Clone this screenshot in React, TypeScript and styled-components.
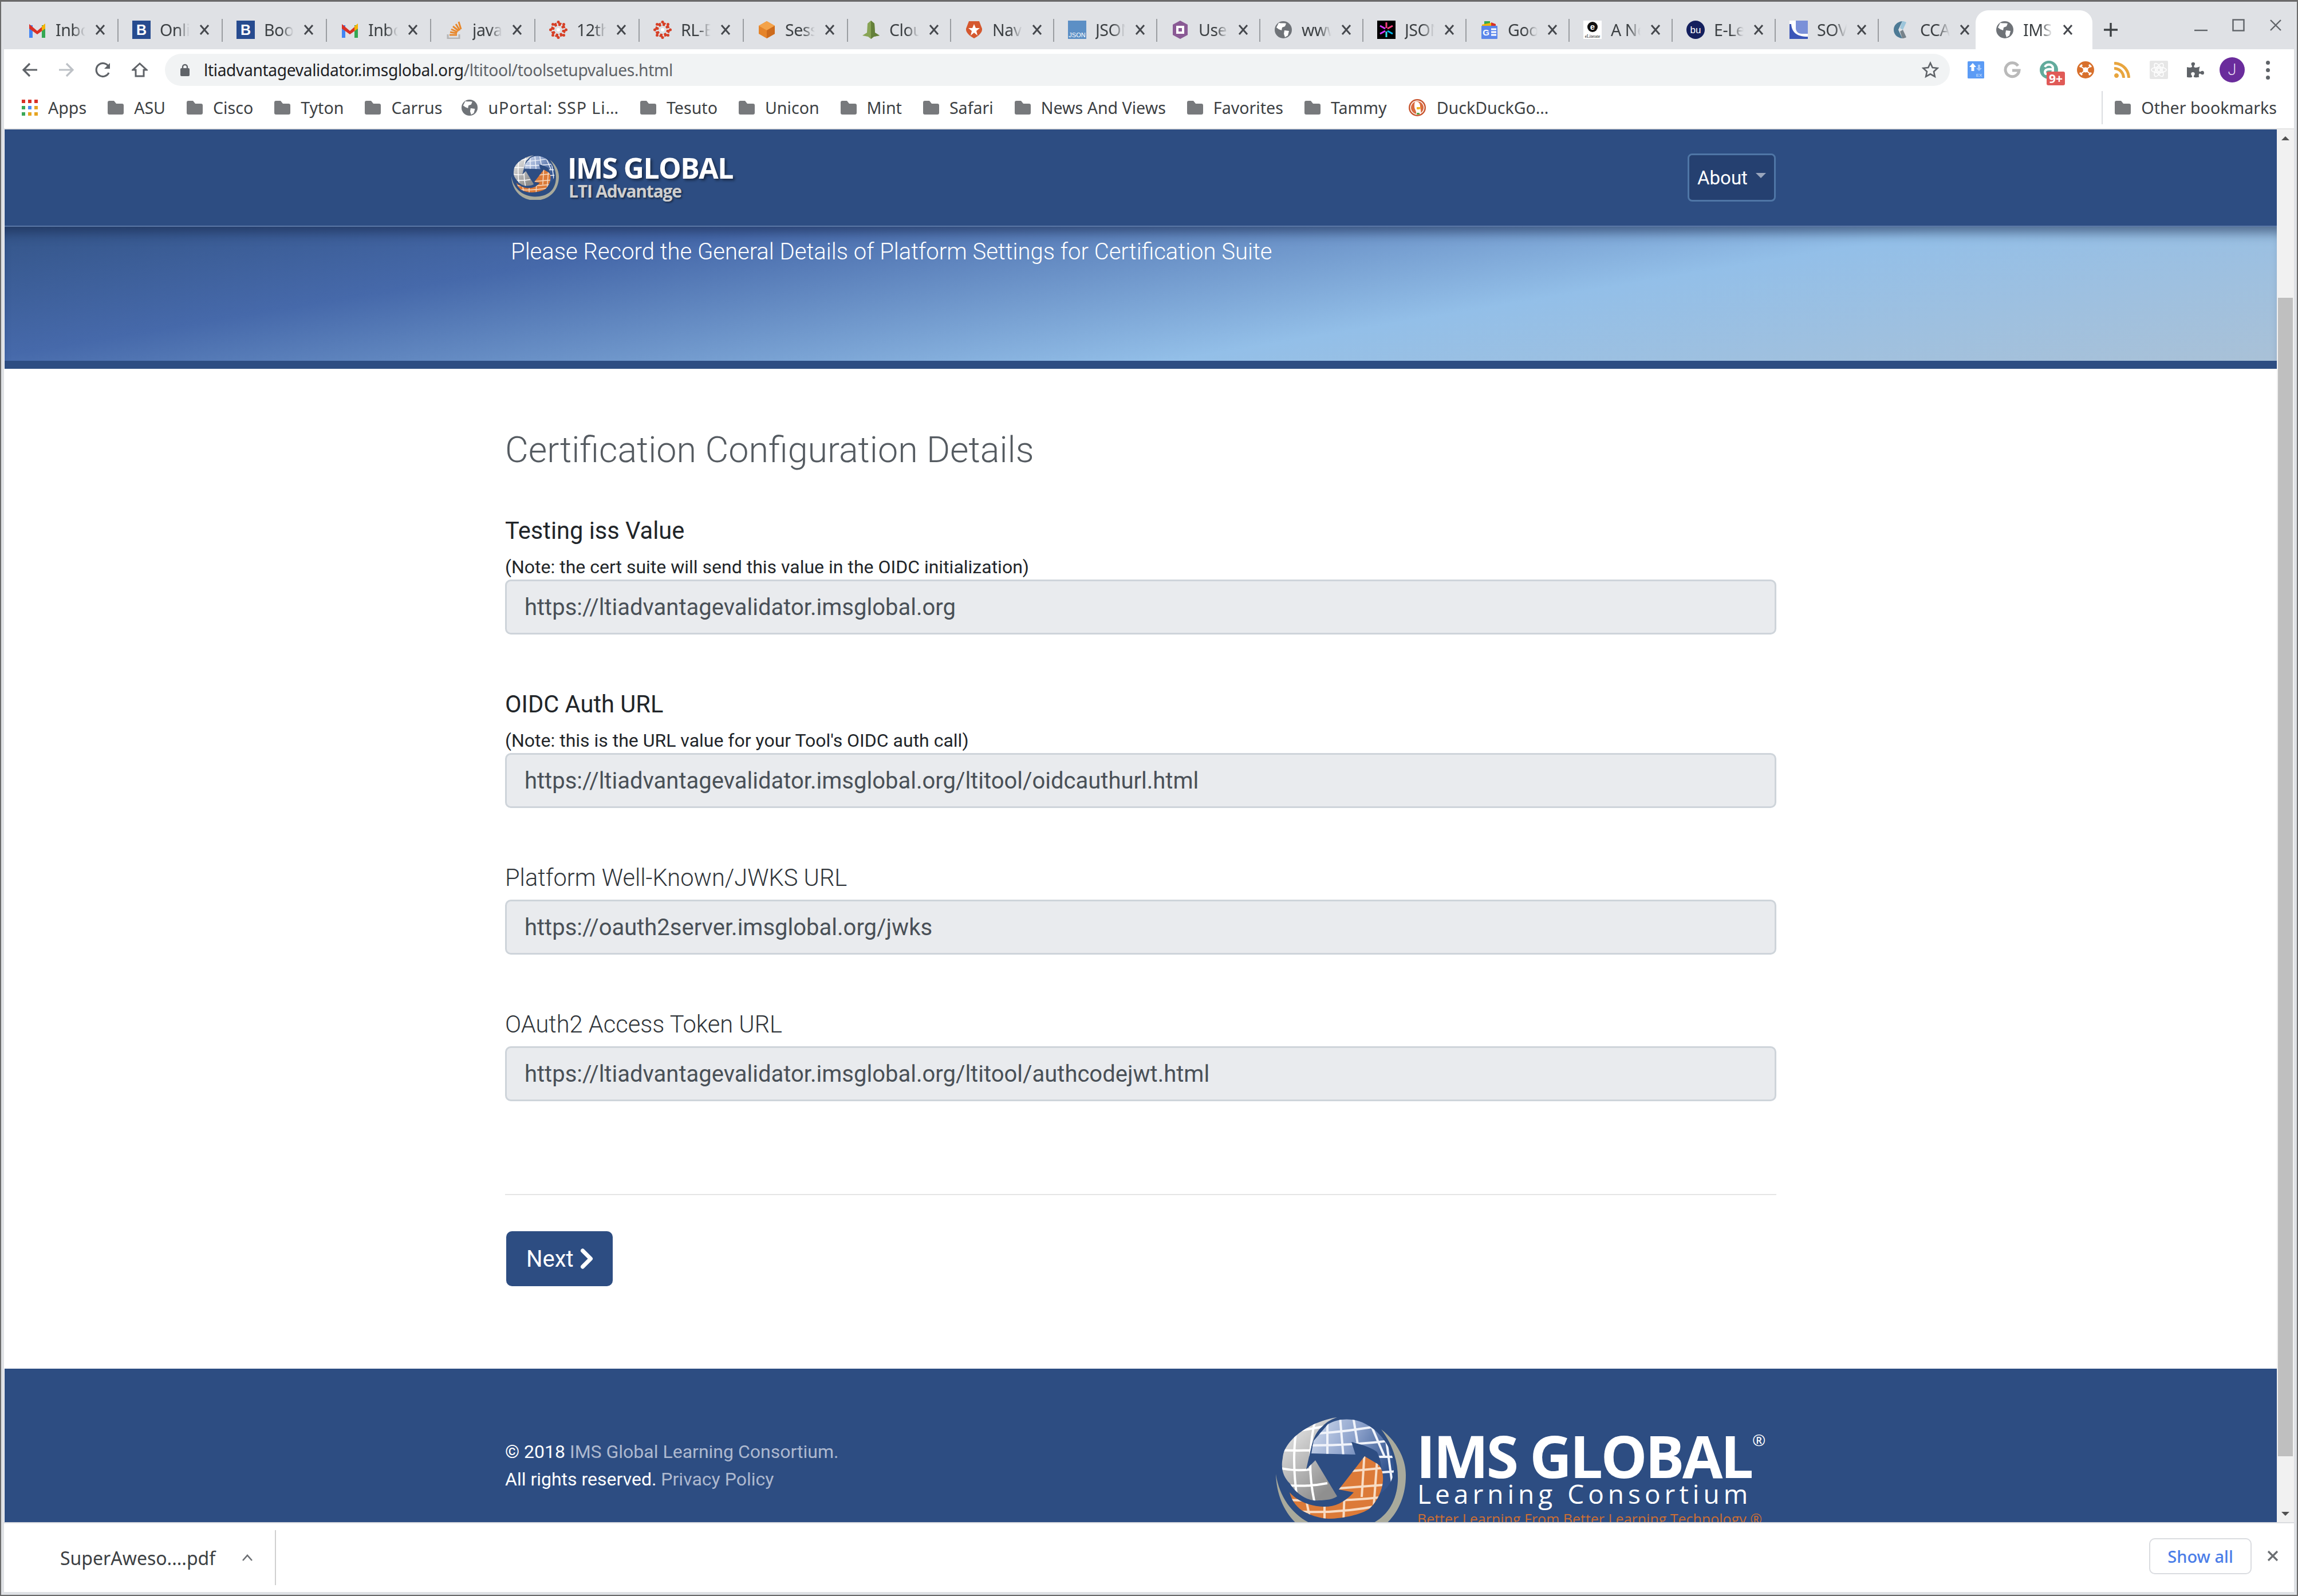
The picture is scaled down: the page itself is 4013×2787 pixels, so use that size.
import React from 'react';
import styled, { createGlobalStyle } from 'styled-components';
import { FaPuzzlePiece, FaRss } from 'react-icons/fa';

const Global = createGlobalStyle`
  html, body { margin: 0; padding: 0; background: #fff; overflow: hidden; }
  * { box-sizing: border-box; }
`;

const CHROME_FONT = `"Noto Sans", "Open Sans", sans-serif`;
const PAGE_FONT = `Roboto, "Liberation Sans", sans-serif`;
const NAVY = '#2d4d82';

const Window = styled.div`
  width: 4013px; height: 2787px;
  display: flex; flex-direction: column;
  border: 2px solid #6a6a6a; border-top-width: 3px;
  padding: 0 5px 5px;
  background: #dfe1e5;
  overflow: hidden;
  font-family: ${CHROME_FONT};
`;

const TabStrip = styled.div`
  height: 83px; flex: none;
  display: flex; align-items: stretch;
  padding: 15px 21px 0 18px;
  background: #dfe1e5;
`;
const Tab = styled.div<{ $w: number; $active?: boolean; $noSep?: boolean }>`
  position: relative;
  width: ${p => p.$w}px; height: 68px; flex: none;
  display: flex; align-items: center;
  padding-left: 24px;
  z-index: ${p => (p.$active ? 1 : 0)};
  ${p => p.$active && `
    &::before {
      content: ''; position: absolute; top: 0; bottom: 0; left: -11px; right: -13px;
      background: #fff; border-radius: 22px 22px 0 0; z-index: -1;
    }
  `}
  ${p => !p.$noSep && `
    &::after {
      content: ''; position: absolute; right: 0; top: 15px; height: 40px; width: 2px;
      background: #9a9da1;
    }
  `}
`;
const TabIcon = styled.span`
  width: 32px; height: 32px; flex: none; display: flex;
  svg { display: block; width: 100%; height: 100%; }
`;
const TabTitle = styled.span`
  width: 52px; margin-left: 16px; flex: none;
  overflow: hidden; white-space: nowrap;
  font-size: 28.6px; line-height: 40px; color: #3c4043; letter-spacing: -0.5px;
  -webkit-mask-image: linear-gradient(to right, #000 58%, transparent 100%);
  mask-image: linear-gradient(to right, #000 58%, transparent 100%);
`;
const TabClose = styled.span`
  width: 24px; height: 24px; margin-left: 14px; flex: none; display: flex;
`;
const NewTab = styled.span`
  margin-left: 32px; align-self: center; display: flex; width: 26px; height: 26px;
`;
const WinControls = styled.div`
  margin-left: auto; padding-top: 15px; display: flex; gap: 43px; align-items: flex-start;
`;

const Toolbar = styled.div`
  height: 84px; flex: none;
  display: flex; align-items: center;
  padding: 0 41px 12px 31px;
  background: #fff;
`;
const NavIcons = styled.div`
  display: flex; gap: 36px; align-items: center; margin-right: 30px;
`;
const Omnibox = styled.div`
  flex: 1; height: 56px; border-radius: 28px;
  background: #f1f3f4;
  display: flex; align-items: center;
  padding: 0 19px 0 27px;
  font-size: 28.2px; letter-spacing: -0.36px;
`;
const Host = styled.span`color: #202124;`;
const UrlPath = styled.span`color: #5f6368;`;
const UrlText = styled.div`margin-left: 25px; white-space: nowrap; flex: 1;`;
const ExtIcons = styled.div`
  margin-left: 29px; display: flex; gap: 32px; align-items: center;
`;
const ExtIcon = styled.span`
  position: relative; width: 32px; height: 32px; display: flex; align-items: center; justify-content: center;
  svg { display: block; }
`;
const Badge = styled.span`
  position: absolute; left: 12px; top: 19px; width: 32px; height: 24px;
  background: #e05a57; border-radius: 3px; color: #fff;
  font-size: 21px; font-weight: 700; line-height: 24px; text-align: center;
`;
const Avatar = styled.span`
  width: 44px; height: 44px; border-radius: 50%; margin-left: -6px;
  background: #6a2c9c; color: #e8dcf3;
  display: flex; align-items: center; justify-content: center;
  font-family: ${PAGE_FONT}; font-size: 27px; font-weight: 300;
`;
const MenuDots = styled.span`
  margin-left: 37px; width: 8px; display: flex; flex-direction: column; gap: 6px;
  i { display: block; width: 7px; height: 7px; border-radius: 50%; background: #5f6368; }
`;

const BookmarkBar = styled.div`
  height: 56px; flex: none;
  display: flex; align-items: center; gap: 37px;
  padding: 0 30px 18px 31px;
  background: #fff;
  border-bottom: 2px solid #e5e5e5;
`;
const Bookmark = styled.div<{ $wide?: boolean }>`
  display: flex; align-items: center; gap: 18px;
  font-size: 28.6px; line-height: 36px; color: #3c4043; white-space: nowrap;
  ${p => p.$wide && 'margin-left: -5px; letter-spacing: 0.9px;'}
`;
const OtherBookmarks = styled(Bookmark)`
  margin-left: auto; position: relative;
  &::before {
    content: ''; position: absolute; left: -23px; top: -11px; bottom: -11px; width: 2px; background: #dadce0;
  }
`;

const Viewport = styled.div`
  flex: 1; min-height: 0; display: flex; background: #fff; padding-left: 1px;
`;
const Page = styled.div`
  flex: 1; min-width: 0; overflow: hidden; font-family: ${PAGE_FONT};
`;
const Scrollbar = styled.div`
  width: 30px; flex: none; background: #f1f1f1; display: flex; flex-direction: column; align-items: center;
`;
const ScrollArrow = styled.div<{ $down?: boolean }>`
  height: 30px; flex: none; display: flex; align-items: center; justify-content: center;
  ${p => p.$down && 'margin-top: auto;'}
  &::after {
    content: ''; width: 0; height: 0;
    border-left: 7px solid transparent; border-right: 7px solid transparent;
    ${p => (p.$down ? 'border-top: 7px solid #505050;' : 'border-bottom: 7px solid #505050;')}
  }
`;
const ScrollThumb = styled.div`
  width: 26px; height: 2023px; margin-top: 264px; background: #bfbfbf;
`;

const Container = styled.div`width: 2220px; margin: 0 auto;`;

const NavBar = styled.div`
  height: 170px; background: ${NAVY}; border-bottom: 2px solid #5a77a6;
`;
const NavInner = styled(Container)`
  height: 168px; display: flex; align-items: center; justify-content: space-between;
  padding: 0 1px 0 11px;
`;
const NavBrand = styled.div`display: flex; gap: 15px; align-items: center;`;
const BrandText = styled.div`display: flex; flex-direction: column; font-family: "Open Sans", sans-serif;`;
const BrandTitle = styled.span`
  font-size: 50px; line-height: 48px; font-weight: 700; color: #fff; letter-spacing: -1.6px;
  text-shadow: 3px 3px 4px rgba(0,0,0,.45);
`;
const BrandSub = styled.span`
  font-size: 30px; line-height: 34px; font-weight: 700; color: #cfcfcf; letter-spacing: -1.2px; margin-left: 2px;
  text-shadow: 2px 2px 3px rgba(0,0,0,.45);
`;
const AboutButton = styled.div`
  width: 154px; height: 84px; background: #254070;
  border: 3px solid #4f76a6; border-radius: 8px;
  display: flex; align-items: center; padding-left: 14px; gap: 14px;
  color: #fff; font-size: 33px;
  &::after {
    content: ''; width: 0; height: 0; margin-top: -8px;
    border-left: 9px solid transparent; border-right: 9px solid transparent; border-top: 9px solid #9aa6bd;
  }
`;

const Hero = styled.div`
  height: 248px; border-bottom: 14px solid ${NAVY};
  background: linear-gradient(170.5deg, #345589 0%, #4669aa 25%, #93bfe8 64%, #a9c1d7 100%);
  box-shadow: inset 0 22px 20px -12px rgba(20,35,70,.55);
`;
const HeroInner = styled(Container)`padding: 19px 0 0 10px;`;
const HeroTitle = styled.div`
  font-size: 40px; line-height: 50px; font-weight: 300; color: #fff;
`;

const Main = styled(Container)`
  padding-top: 103px; display: flex; flex-direction: column; align-items: stretch;
`;
const PageTitle = styled.h2`
  margin: 0 0 78px; font-size: 62.8px; line-height: 77px; font-weight: 300; color: #555b61;
`;
const Field = styled.div`margin-bottom: 97px;`;
const LastField = styled(Field)`margin-bottom: 162px;`;
const FieldLabel = styled.div<{ $light?: boolean }>`
  font-size: 41.6px; line-height: 50px;
  font-weight: ${p => (p.$light ? 300 : 400)};
  color: ${p => (p.$light ? '#30353a' : '#212529')};
  margin-bottom: ${p => (p.$light ? 13 : 18)}px;
`;
const FieldNote = styled.div`
  font-size: 32px; line-height: 40px; color: #212529; margin-bottom: 2px;
`;
const ReadOnlyInput = styled.div`
  height: 96px; background: #e9ebee;
  border: 3px solid #ced4da; border-radius: 10px;
  padding-left: 31px;
  display: flex; align-items: center;
  font-size: 40px; color: #495057; white-space: nowrap;
`;
const Divider = styled.div`height: 2px; background: #e5e5e5; margin-bottom: 63px;`;
const NextButton = styled.div`
  width: 186px; height: 96px; margin: 0 0 144px 2px;
  background: ${NAVY}; border-radius: 10px; color: #fff;
  display: flex; align-items: center; gap: 11px; padding-left: 35px;
  font-size: 40px;
`;

const Footer = styled.div`background: ${NAVY}; padding-top: 84px; height: 420px;`;
const FooterInner = styled(Container)`
  display: grid; grid-template-columns: 1346px 1fr; align-items: start;
`;
const Copy = styled.div`
  margin-top: 37px; font-size: 32px; line-height: 48px; color: #fff;
`;
const FootLink = styled.span`color: #aeb9cf;`;
const FooterLogo = styled.div`display: flex; gap: 18px; align-items: flex-start;`;
const LogoText = styled.div`display: flex; flex-direction: column; font-family: "Open Sans", sans-serif; white-space: nowrap;`;
const LogoTitle = styled.div`
  position: relative; margin-top: 21px; font-size: 102px; line-height: 94px; font-weight: 700; color: #fff; letter-spacing: -3.6px;
`;
const LogoReg = styled.span`
  position: absolute; left: 587px; top: 4px; font-size: 28px; line-height: 30px; letter-spacing: 0; font-weight: 400;
`;
const LogoSub = styled.div`
  font-size: 46px; line-height: 38px; color: #fff; letter-spacing: 7px; margin-left: 2px;
`;
const LogoTag = styled.div`
  margin-top: 10px; font-size: 25px; line-height: 30px; color: #cf6f33; margin-left: 2px;
`;

const DownloadBar = styled.div`
  height: 122px; flex: none; background: #fff; border-top: 2px solid #dadce0;
  display: flex; align-items: center; padding: 0 27px 0 98px; font-size: 32px; color: #3c4043;
`;
const DownloadName = styled.span`white-space: nowrap;`;
const DownloadChevron = styled.span`margin-left: 46px; display: flex;`;
const DownloadSep = styled.span`width: 2px; height: 96px; background: #d0d0d0; margin-left: 38px;`;
const ShowAll = styled.div`
  margin: 0 0 6px auto; width: 179px; height: 63px; border: 2px solid #dadce0; border-radius: 10px;
  display: flex; align-items: center; justify-content: center;
  color: #4a7de8; font-size: 29px; font-weight: 500;
`;
const DownloadClose = styled.span`margin: 0 0 6px 27px; display: flex;`;

/* ---------- drawings ---------- */

const CloseX = () => (
  <svg width="24" height="24" viewBox="0 0 24 24"><path d="M5 4l14 16M19 4L5 20" stroke="#45484d" strokeWidth="3" /></svg>
);

const GrayGlobe = ({ s = 32 }: { s?: number }) => (
  <svg viewBox="0 0 32 32" width={s} height={s}>
    <circle cx="16" cy="16" r="15" fill="#6f7378" />
    <path d="M8 4c5 1 9 0 13 1l-2 5-5 2-1 5-5-2-4-3zM18 17l8 1-2 8-5 3-2-6z" fill="#fff" />
  </svg>
);
const Gmail = () => (
  <svg viewBox="0 0 32 32"><path d="M2 8h6v22H2z" fill="#4285f4" /><path d="M24 8h6v22h-6z" fill="#34a853" /><path d="M2 6l14 12L30 6v8L16 24 2 14z" fill="#d93025" /><path d="M24 10l6-5v9l-6 4z" fill="#f4b400" /></svg>
);
const BTile = () => (
  <svg viewBox="0 0 32 32"><rect width="32" height="32" fill="#274b8f" /><text x="16" y="25" textAnchor="middle" fontFamily="Liberation Sans" fontWeight="700" fontSize="25" fill="#fff">B</text></svg>
);
const StackIcon = () => (
  <svg viewBox="0 0 32 32"><path d="M5 24v7h20v-7" fill="none" stroke="#b5b5b5" strokeWidth="3" /><path d="M8 25h13M9 20l12 2M11 15l11 5M14 10l10 8M19 6l7 11M24 2l4 13" stroke="#e8882c" strokeWidth="3" /></svg>
);
const Canvas = () => (
  <svg viewBox="0 0 32 32"><circle cx="16" cy="16" r="10" fill="none" stroke="#d64027" strokeWidth="6" strokeDasharray="5 2.8" /><circle cx="16" cy="16" r="3" fill="#fff" />
    <circle cx="16" cy="2.500" r="2.500" fill="#d64027" /><circle cx="16" cy="29.500" r="2.500" fill="#d64027" /><circle cx="2.500" cy="16" r="2.500" fill="#d64027" /><circle cx="29.500" cy="16" r="2.500" fill="#d64027" /><circle cx="6.500" cy="6.500" r="2.500" fill="#d64027" /><circle cx="25.500" cy="6.500" r="2.500" fill="#d64027" /><circle cx="6.500" cy="25.500" r="2.500" fill="#d64027" /><circle cx="25.500" cy="25.500" r="2.500" fill="#d64027" />
  </svg>
);
const OrangeBox = () => (
  <svg viewBox="0 0 32 32"><path d="M16 1l14 8v14l-14 8-14-8V9z" fill="#e5842a" /><path d="M16 1l14 8-14 8L2 9z" fill="#f4a34a" /><path d="M16 17v14l14-8V9z" fill="#cd6b1c" /></svg>
);
const GreenBell = () => (
  <svg viewBox="0 0 32 32"><path d="M16 0l6 5 1 16 8 5-10 2-5 4-5-4-10-2 8-5 1-16z" fill="#88a455" /><path d="M16 0l6 5 1 16 8 5-10 2-5 4z" fill="#64803a" /></svg>
);
const Auth0 = () => (
  <svg viewBox="0 0 32 32"><path d="M7 1h18l5 13c1 6-6 13-14 17C8 27 1 20 2 14z" fill="#d5582f" /><path d="M16 6l3 7h7l-6 5 2 8-6-5-6 5 2-8-6-5h7z" fill="#fff" /></svg>
);
const JsonTile = () => (
  <svg viewBox="0 0 32 32"><rect width="32" height="32" fill="#5c8fc5" /><text x="16" y="29" textAnchor="middle" fontFamily="Liberation Sans" fontSize="11" fill="#fff">JSON</text></svg>
);
const PurpleHex = () => (
  <svg viewBox="0 0 32 32"><path d="M16 0l13 7v18l-13 7-13-7V7z" fill="#8a5a95" /><path d="M9 9h14v14H9z" fill="#fff" /><path d="M13 13h6v6h-6z" fill="#8a5a95" /></svg>
);
const JwtTile = () => (
  <svg viewBox="0 0 32 32"><rect width="32" height="32" fill="#000" /><path d="M16 3v10" stroke="#f5417b" strokeWidth="3" /><path d="M16 19v10" stroke="#35e0ea" strokeWidth="3" /><path d="M5 9l9 5" stroke="#d63aff" strokeWidth="3" /><path d="M27 23l-9-5" stroke="#00b9f1" strokeWidth="3" /><path d="M5 23l9-5" stroke="#d63aff" strokeWidth="3" /><path d="M27 9l-9 5" stroke="#f5417b" strokeWidth="3" /></svg>
);
const GoogleEdu = () => (
  <svg viewBox="0 0 32 32"><path d="M7 1h10v8H7z" fill="#34a853" /><path d="M3 7l14-3 8 2v6H3z" fill="#f4b400" /><path d="M19 3l8 3v6h-8z" fill="#d93025" /><rect x="2" y="9" width="28" height="23" rx="1" fill="#5a85ea" /><text x="10" y="26" textAnchor="middle" fontFamily="Liberation Sans" fontWeight="700" fontSize="15" fill="#fff">G</text><path d="M19 15h9M19 20h9M19 25h9" stroke="#fff" strokeWidth="3" /></svg>
);
const ELiterate = () => (
  <svg viewBox="0 0 32 32"><rect width="32" height="32" fill="#fff" /><circle cx="16" cy="11" r="9" fill="#111" /><text x="16" y="16" textAnchor="middle" fontFamily="Liberation Sans" fontWeight="700" fontSize="15" fill="#fff">e</text><text x="16" y="30" textAnchor="middle" fontFamily="Liberation Serif" fontSize="7.5" fill="#111">eLiterate</text></svg>
);
const BuCircle = () => (
  <svg viewBox="0 0 32 32"><circle cx="16" cy="16" r="16" fill="#14205e" /><text x="16" y="22" textAnchor="middle" fontFamily="Liberation Sans" fontSize="17" fill="#fff">bu</text></svg>
);
const UShape = () => (
  <svg viewBox="0 0 32 32"><rect width="32" height="32" fill="#fff" /><path d="M11 0H32V23H22C15 23 11 19 11 13Z" fill="#7a90d8" /><path d="M0 6H3C4 20 12 28 32 28V32H0Z" fill="#3a55b8" /></svg>
);
const CcaIcon = () => (
  <svg viewBox="0 0 32 32"><path d="M17 1l-7 15 7 15C8 30 2 24 2 16S8 2 17 1z" fill="#4d7a95" /><path d="M17 1c4 0 7 2 7 2l-6 13-5-3z" fill="#9cc5da" /><path d="M13 19l5-3 6 13s-3 2-7 2z" fill="#77828a" /></svg>
);

const TABS: { t: string; w: number; icon: React.ReactNode; active?: boolean; noSep?: boolean }[] = [
  { t: 'Inbox', w: 182, icon: <Gmail /> },
  { t: 'Online', w: 182, icon: <BTile /> },
  { t: 'Book', w: 182, icon: <BTile /> },
  { t: 'Inbox', w: 182, icon: <Gmail /> },
  { t: 'javascript', w: 182, icon: <StackIcon /> },
  { t: '12th', w: 182, icon: <Canvas /> },
  { t: 'RL-EX', w: 182, icon: <Canvas /> },
  { t: 'Session', w: 182, icon: <OrangeBox /> },
  { t: 'Cloud', w: 180, icon: <GreenBell /> },
  { t: 'Navigate', w: 180, icon: <Auth0 /> },
  { t: 'JSON', w: 180, icon: <JsonTile /> },
  { t: 'Users', w: 180, icon: <PurpleHex /> },
  { t: 'www.', w: 180, icon: <GrayGlobe /> },
  { t: 'JSON', w: 180, icon: <JwtTile /> },
  { t: 'Google', w: 180, icon: <GoogleEdu /> },
  { t: 'A New', w: 180, icon: <ELiterate /> },
  { t: 'E-Learn', w: 180, icon: <BuCircle /> },
  { t: 'SOVA', w: 180, icon: <UShape /> },
  { t: 'CCA', w: 180, icon: <CcaIcon />, noSep: true },
  { t: 'IMS', w: 180, icon: <GrayGlobe />, active: true, noSep: true },
];

const Folder = () => (
  <svg width="28" height="24" viewBox="0 0 28 24"><path d="M0 3a3 3 0 013-3h8l4 5h10a3 3 0 013 3v13a3 3 0 01-3 3H3a3 3 0 01-3-3z" fill="#77797c" /></svg>
);
const AppsGrid = () => (
  <svg width="28" height="28" viewBox="0 0 28 28">
    {[['#d93025', '#d93025', '#d93025'], ['#3aa757', '#4b8cf0', '#e6a522'], ['#3aa757', '#e6a522', '#e6a522']].map((row, r) =>
      row.map((c, i) => <rect key={`${r}${i}`} x={i * 11} y={r * 11} width="6" height="6" fill={c} />)
    )}
  </svg>
);
const Duck = () => (
  <svg width="32" height="32" viewBox="0 0 32 32"><circle cx="16" cy="16" r="15" fill="#c8552f" /><circle cx="16" cy="16" r="12.5" fill="#fff" /><circle cx="16" cy="16" r="11" fill="#d96a3f" /><path d="M12 6c5-2 9 2 9 7 0 4 2 9 1 14h-8c1-5-3-8-3-13 0-3 0-6 1-8z" fill="#fff" /><path d="M15 15h8l-3 4h-5z" fill="#f0b429" /><path d="M15 25h5v3h-5z" fill="#5aa845" /></svg>
);
const ChevronBold = () => (
  <svg width="24" height="36" viewBox="0 0 24 36"><path d="M4.500 4L18.500 18 4.500 32" fill="none" stroke="#fff" strokeWidth="7" strokeLinecap="round" strokeLinejoin="round" /></svg>
);

const BOOKMARKS: { t: string; kind?: 'apps' | 'globe' | 'duck' }[] = [
  { t: 'Apps', kind: 'apps' }, { t: 'ASU' }, { t: 'Cisco' }, { t: 'Tyton' }, { t: 'Carrus' },
  { t: 'uPortal: SSP Li…', kind: 'globe' }, { t: 'Tesuto' }, { t: 'Unicon' }, { t: 'Mint' }, { t: 'Safari' },
  { t: 'News And Views' }, { t: 'Favorites' }, { t: 'Tammy' }, { t: 'DuckDuckGo…', kind: 'duck' },
];

const Grid = ({ lines, color }: { lines: string; color: string }) => (
  <path d={lines} fill="none" stroke={color} strokeWidth="4" />
);

const Globe = ({ width, id }: { width: number; id: string }) => {
  const grey = 'M107 1C60 8 14 40 12 72C8 92 14 106 24 116C38 138 58 148 75 146C88 146 100 144 107 139L69 76L53 92L62 52C66 36 72 24 82 16C90 8 98 4 107 1Z';
  const blue = 'M91 13L66 42L62 64L139 66L132 44C150 48 172 56 177 62C186 80 188 110 180 136C196 124 208 110 206 84C204 50 172 10 133 5C118 3 102 6 91 13Z';
  const orange = 'M155 69L110 127L136 132C118 152 100 158 82 157C60 156 38 148 24 132C28 148 38 160 50 166C68 176 90 180 108 177C136 174 158 166 165 159C178 146 186 128 187 112C188 98 184 86 177 82Z';
  return (
    <svg width={width} height={(width * 216) / 227} viewBox="0 0 227 216" style={{ flex: 'none', display: 'block' }}>
      <defs>
        <linearGradient id={`${id}g`} x1="0" y1="0" x2="0.6" y2="1"><stop offset="0" stopColor="#f2f2f2" /><stop offset="1" stopColor="#8f8f8f" /></linearGradient>
        <linearGradient id={`${id}b`} x1="0" y1="0" x2="1" y2="0.5"><stop offset="0" stopColor="#d3ddef" /><stop offset="0.5" stopColor="#8ea3cc" /><stop offset="1" stopColor="#32548f" /></linearGradient>
        <clipPath id={`${id}cg`}><path d={grey} /></clipPath>
        <clipPath id={`${id}cb`}><path d={blue} /></clipPath>
        <clipPath id={`${id}co`}><path d={orange} /></clipPath>
      </defs>
      <path d="M0 100C2 170 50 216 113 216C180 216 227 170 227 102C227 70 208 40 184 22C205 50 214 80 213 112C210 170 170 198 113 198C60 198 10 165 0 100Z" fill="#a9aa9c" />
      <path d={grey} fill={`url(#${id}g)`} />
      <g clipPath={`url(#${id}cg)`}>
        <Grid color="#fff" lines="M0 30Q40 25 90 16M0 58Q40 60 70 58M0 88Q30 96 60 92M0 118Q50 124 90 116M40 0Q24 70 40 160M70 0Q50 80 70 160" />
      </g>
      <path d={blue} fill={`url(#${id}b)`} />
      <g clipPath={`url(#${id}cb)`}>
        <Grid color="#f0f3fa" lines="M60 30Q130 26 190 14M60 50Q140 50 215 40M130 70L220 70M140 100L215 95M90 0L90 70M112 0L118 70M135 0L145 60M160 0L190 70M190 20L205 130" />
      </g>
      <path d={orange} fill="#dc7a38" />
      <g clipPath={`url(#${id}co)`}>
        <Grid color="#f8dcc4" lines="M130 95L200 88M110 125L200 118M20 145Q100 150 190 140M30 165Q110 170 180 155M155 60L150 140M178 60L170 170M50 130L60 180M85 140L85 185M120 130L118 185" />
      </g>
    </svg>
  );
};

const FIELDS = [
  { label: 'Testing iss Value', note: '(Note: the cert suite will send this value in the OIDC initialization)', value: 'https://ltiadvantagevalidator.imsglobal.org' },
  { label: 'OIDC Auth URL', note: "(Note: this is the URL value for your Tool's OIDC auth call)", value: 'https://ltiadvantagevalidator.imsglobal.org/ltitool/oidcauthurl.html' },
  { label: 'Platform Well-Known/JWKS URL', value: 'https://oauth2server.imsglobal.org/jwks' },
];

export default function App() {
  return (
    <Window>
      <Global />
      <TabStrip>
        {TABS.map((tab, i) => (
          <Tab key={i} $w={tab.w} $active={tab.active} $noSep={tab.noSep}>
            <TabIcon>{tab.icon}</TabIcon>
            <TabTitle>{tab.t}</TabTitle>
            <TabClose><CloseX /></TabClose>
          </Tab>
        ))}
        <NewTab>
          <svg width="26" height="26" viewBox="0 0 26 26"><path d="M13 1v24M1 13h24" stroke="#3c4043" strokeWidth="3.4" /></svg>
        </NewTab>
        <WinControls>
          <svg width="23" height="22" viewBox="0 0 23 22"><path d="M0 20h23" stroke="#5f6368" strokeWidth="2.4" /></svg>
          <svg width="22" height="22" viewBox="0 0 22 22"><rect x="1.5" y="1.5" width="19" height="19" fill="none" stroke="#5f6368" strokeWidth="2.4" /></svg>
          <svg width="22" height="22" viewBox="0 0 22 22"><path d="M2 2l18 18M20 2L2 20" stroke="#5f6368" strokeWidth="2.4" /></svg>
        </WinControls>
      </TabStrip>

      <Toolbar>
        <NavIcons>
          <svg width="28" height="28" viewBox="0 0 28 28"><path d="M27 14H4M14 3L3 14l11 11" fill="none" stroke="#5f6368" strokeWidth="3.2" /></svg>
          <svg width="28" height="28" viewBox="0 0 28 28"><path d="M1 14h23M14 3l11 11-11 11" fill="none" stroke="#bdc1c6" strokeWidth="3.2" /></svg>
          <svg width="28" height="28" viewBox="0 0 28 28"><path d="M24 9a11.5 11.5 0 100 10" fill="none" stroke="#5f6368" strokeWidth="3.2" /><path d="M26 2v10H16z" fill="#5f6368" /></svg>
          <svg width="28" height="28" viewBox="0 0 28 28"><path d="M14 3L2 14h5v11h14V14h5z" fill="none" stroke="#5f6368" strokeWidth="3" /></svg>
        </NavIcons>
        <Omnibox>
          <svg width="16" height="22" viewBox="0 0 16 22"><path d="M4 9V6a4 4 0 018 0v3" fill="none" stroke="#5f6368" strokeWidth="2.4" /><rect y="8" width="16" height="14" rx="2" fill="#5f6368" /></svg>
          <UrlText><Host>ltiadvantagevalidator.imsglobal.org</Host><UrlPath>/ltitool/toolsetupvalues.html</UrlPath></UrlText>
          <svg width="30" height="30" viewBox="0 0 30 30"><path d="M15 3l3.7 8 8.8 1-6.5 6 1.8 8.7L15 22.3l-7.8 4.4L9 18l-6.500-6 8.800-1z" fill="none" stroke="#5f6368" strokeWidth="2.6" /></svg>
        </Omnibox>
        <ExtIcons>
          <ExtIcon>
            <svg width="29" height="30" viewBox="0 0 29 30"><rect width="29" height="30" rx="1.500" fill="#5b9bf5" /><path d="M9 3l6 7h-3.500v7h-5v-7H3z" fill="#fff" /><path d="M18 6h4v6h3l-5 5-5-5h3z" fill="#a9cbfa" /><text x="20" y="27" textAnchor="middle" fontFamily="Liberation Sans" fontSize="8" fill="#d8e7fd">EX</text></svg>
          </ExtIcon>
          <ExtIcon>
            <svg width="30" height="30" viewBox="0 0 30 30"><path d="M25 8a12 12 0 10 2 8H15" fill="none" stroke="#b9b9b9" strokeWidth="5" /></svg>
          </ExtIcon>
          <ExtIcon>
            <svg width="32" height="32" viewBox="0 0 32 32"><circle cx="16" cy="16" r="16" fill="#62ab9c" /><path d="M9 11a7.500 7.500 0 0114 1v11M22 15c-9-1-13 1-13 5s6 5 13 0" fill="none" stroke="#fff" strokeWidth="4" /></svg>
            <Badge>9+</Badge>
          </ExtIcon>
          <ExtIcon>
            <svg width="30" height="30" viewBox="0 0 30 30"><circle cx="15" cy="15" r="15" fill="#d8702c" /><circle cx="15" cy="15" r="4.500" fill="#fff" /><path d="M15 15L7 9M15 15l8-6M15 15l-8 7M15 15l8 7" stroke="#fff" strokeWidth="2" /><path d="M5 10l4-4M21 6l4 4M5 20l4 4M21 24l4-4" stroke="#fff" strokeWidth="3" /></svg>
          </ExtIcon>
          <ExtIcon><FaRss size={32} color="#e8a53e" /></ExtIcon>
          <ExtIcon>
            <svg width="32" height="32" viewBox="0 0 32 32"><rect width="32" height="32" rx="2" fill="#e6e6e6" /><circle cx="16" cy="16" r="3" fill="none" stroke="#fff" strokeWidth="1.600" /><ellipse cx="16" cy="16" rx="13" ry="5" fill="none" stroke="#fff" strokeWidth="1.500" /><ellipse cx="16" cy="16" rx="13" ry="5" fill="none" stroke="#fff" strokeWidth="1.500" transform="rotate(60 16 16)" /><ellipse cx="16" cy="16" rx="13" ry="5" fill="none" stroke="#fff" strokeWidth="1.500" transform="rotate(120 16 16)" /></svg>
          </ExtIcon>
          <ExtIcon><FaPuzzlePiece size={30} color="#5f6368" /></ExtIcon>
          <Avatar>J</Avatar>
        </ExtIcons>
        <MenuDots><i /><i /><i /></MenuDots>
      </Toolbar>

      <BookmarkBar>
        {BOOKMARKS.map(b => (
          <Bookmark key={b.t} $wide={b.kind === 'globe'}>
            {b.kind === 'apps' ? <AppsGrid /> : b.kind === 'globe' ? <GrayGlobe s={30} /> : b.kind === 'duck' ? <Duck /> : <Folder />}
            {b.t}
          </Bookmark>
        ))}
        <OtherBookmarks><Folder />Other bookmarks</OtherBookmarks>
      </BookmarkBar>

      <Viewport>
        <Page>
          <NavBar>
            <NavInner>
              <NavBrand>
                <Globe width={83} id="nav" />
                <BrandText>
                  <BrandTitle>IMS GLOBAL</BrandTitle>
                  <BrandSub>LTI Advantage</BrandSub>
                </BrandText>
              </NavBrand>
              <AboutButton>About</AboutButton>
            </NavInner>
          </NavBar>
          <Hero>
            <HeroInner>
              <HeroTitle>Please Record the General Details of Platform Settings for Certification Suite</HeroTitle>
            </HeroInner>
          </Hero>
          <Main>
            <PageTitle>Certification Configuration Details</PageTitle>
            {FIELDS.map(f => (
              <Field key={f.label}>
                <FieldLabel $light={!f.note}>{f.label}</FieldLabel>
                {f.note && <FieldNote>{f.note}</FieldNote>}
                <ReadOnlyInput>{f.value}</ReadOnlyInput>
              </Field>
            ))}
            <LastField>
              <FieldLabel $light>OAuth2 Access Token URL</FieldLabel>
              <ReadOnlyInput>https://ltiadvantagevalidator.imsglobal.org/ltitool/authcodejwt.html</ReadOnlyInput>
            </LastField>
            <Divider />
            <NextButton>Next <ChevronBold /></NextButton>
          </Main>
          <Footer>
            <FooterInner>
              <Copy>
                © 2018 <FootLink>IMS Global Learning Consortium.</FootLink><br />
                All rights reserved. <FootLink>Privacy Policy</FootLink>
              </Copy>
              <FooterLogo>
                <Globe width={227} id="foot" />
                <LogoText>
                  <LogoTitle>IMS GLOBAL<LogoReg>®</LogoReg></LogoTitle>
                  <LogoSub>Learning Consortium</LogoSub>
                  <LogoTag>Better Learning From Better Learning Technology ®</LogoTag>
                </LogoText>
              </FooterLogo>
            </FooterInner>
          </Footer>
        </Page>
        <Scrollbar>
          <ScrollArrow />
          <ScrollThumb />
          <ScrollArrow $down />
        </Scrollbar>
      </Viewport>

      <DownloadBar>
        <DownloadName>SuperAweso....pdf</DownloadName>
        <DownloadChevron>
          <svg width="20" height="14" viewBox="0 0 20 14"><path d="M2 12l8-9 8 9" fill="none" stroke="#6b6e72" strokeWidth="2.600" /></svg>
        </DownloadChevron>
        <DownloadSep />
        <ShowAll>Show all</ShowAll>
        <DownloadClose>
          <svg width="20" height="20" viewBox="0 0 20 20"><path d="M2 2l16 16M18 2L2 18" stroke="#6b6e72" strokeWidth="3.200" /></svg>
        </DownloadClose>
      </DownloadBar>
    </Window>
  );
}
